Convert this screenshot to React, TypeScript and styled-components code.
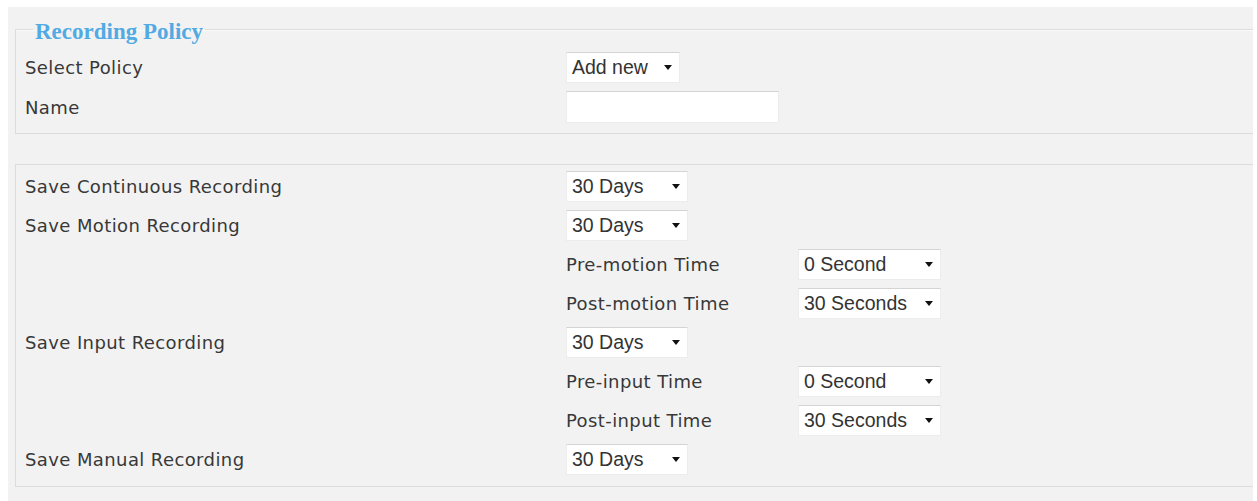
import React from "react";
import styled, { createGlobalStyle } from "styled-components";

const Global = createGlobalStyle`
  html, body { margin: 0; padding: 0; background: #ffffff; }
  body { padding: 7px 4px 0 8px; }
`;

const Page = styled.div`
  background: #f2f2f2;
  min-height: 494px;
  padding: 7px 0 0 7px;
  box-sizing: border-box;
  font-family: "DejaVu Sans", Verdana, sans-serif;
  color: #383838;
`;

const Fieldset = styled.fieldset`
  margin: 0;
  padding: 3px 0 6px 9px;
  border: 1px solid #dcdcdc;
  border-right: none;
  box-shadow: inset 0 1px 0 #fafafa;
`;

const Legend = styled.legend`
  font-family: "Liberation Serif", "Times New Roman", serif;
  font-weight: bold;
  font-size: 23px;
  color: #52aae3;
  padding: 6px 2px 0;
  margin-left: 8px;
  line-height: 24px;
`;

const Panel = styled.div`
  margin-top: 30px;
  padding: 2px 0 7px 9px;
  border: 1px solid #dcdcdc;
  border-right: none;
`;

const Grid = styled.div<{ $row: number }>`
  display: grid;
  grid-template-columns: 541px 232px 1fr;
  grid-auto-rows: ${(p) => p.$row}px;
  align-items: center;
`;

const Label = styled.div<{ $col?: number }>`
  grid-column: ${(p) => p.$col ?? 1};
  font-size: 18px;
  letter-spacing: 0.4px;
  white-space: nowrap;
`;

const Cell = styled.div<{ $col: number }>`
  grid-column: ${(p) => p.$col};
  display: flex;
  align-items: center;
`;

const SelectBox = styled.div<{ $w: number }>`
  width: ${(p) => p.$w}px;
  height: 31px;
  box-sizing: border-box;
  background: #ffffff;
  border-top: 1px solid #d4d4d4;
  border-left: 1px solid #ececec;
  border-right: 1px solid #ececec;
  border-bottom: 1px solid #ececec;
  display: flex;
  align-items: center;
  justify-content: space-between;
  padding: 0 7px 0 5px;
  font-family: "Liberation Sans", Arial, sans-serif;
  font-size: 19.5px;
  color: #333;
`;

const Arrow = styled.span`
  width: 0;
  height: 0;
  border-left: 4px solid transparent;
  border-right: 4px solid transparent;
  border-top: 5px solid #111;
`;

const TextInput = styled.div`
  width: 213px;
  height: 32px;
  box-sizing: border-box;
  background: #fff;
  border-top: 1px solid #d4d4d4;
  border-left: 1px solid #ececec;
  border-right: 1px solid #ececec;
  border-bottom: 1px solid #ececec;
`;

const Select = ({ value, w }: { value: string; w: number }) => (
  <SelectBox $w={w}>
    <span>{value}</span>
    <Arrow />
  </SelectBox>
);

export default function App() {
  return (
    <>
      <Global />
      <Page>
        <Fieldset>
          <Legend>Recording Policy</Legend>
          <Grid $row={40}>
            <Label>Select Policy</Label>
            <Cell $col={2}>
              <Select value="Add new" w={114} />
            </Cell>
            <Label>Name</Label>
            <Cell $col={2}>
              <TextInput />
            </Cell>
          </Grid>
        </Fieldset>
        <Panel>
          <Grid $row={39}>
            <Label>Save Continuous Recording</Label>
            <Cell $col={2}>
              <Select value="30 Days" w={122} />
            </Cell>
            <Label>Save Motion Recording</Label>
            <Cell $col={2}>
              <Select value="30 Days" w={122} />
            </Cell>
            <Label $col={2}>Pre-motion Time</Label>
            <Cell $col={3}>
              <Select value="0 Second" w={143} />
            </Cell>
            <Label $col={2}>Post-motion Time</Label>
            <Cell $col={3}>
              <Select value="30 Seconds" w={143} />
            </Cell>
            <Label>Save Input Recording</Label>
            <Cell $col={2}>
              <Select value="30 Days" w={122} />
            </Cell>
            <Label $col={2}>Pre-input Time</Label>
            <Cell $col={3}>
              <Select value="0 Second" w={143} />
            </Cell>
            <Label $col={2}>Post-input Time</Label>
            <Cell $col={3}>
              <Select value="30 Seconds" w={143} />
            </Cell>
            <Label>Save Manual Recording</Label>
            <Cell $col={2}>
              <Select value="30 Days" w={122} />
            </Cell>
          </Grid>
        </Panel>
      </Page>
    </>
  );
}
